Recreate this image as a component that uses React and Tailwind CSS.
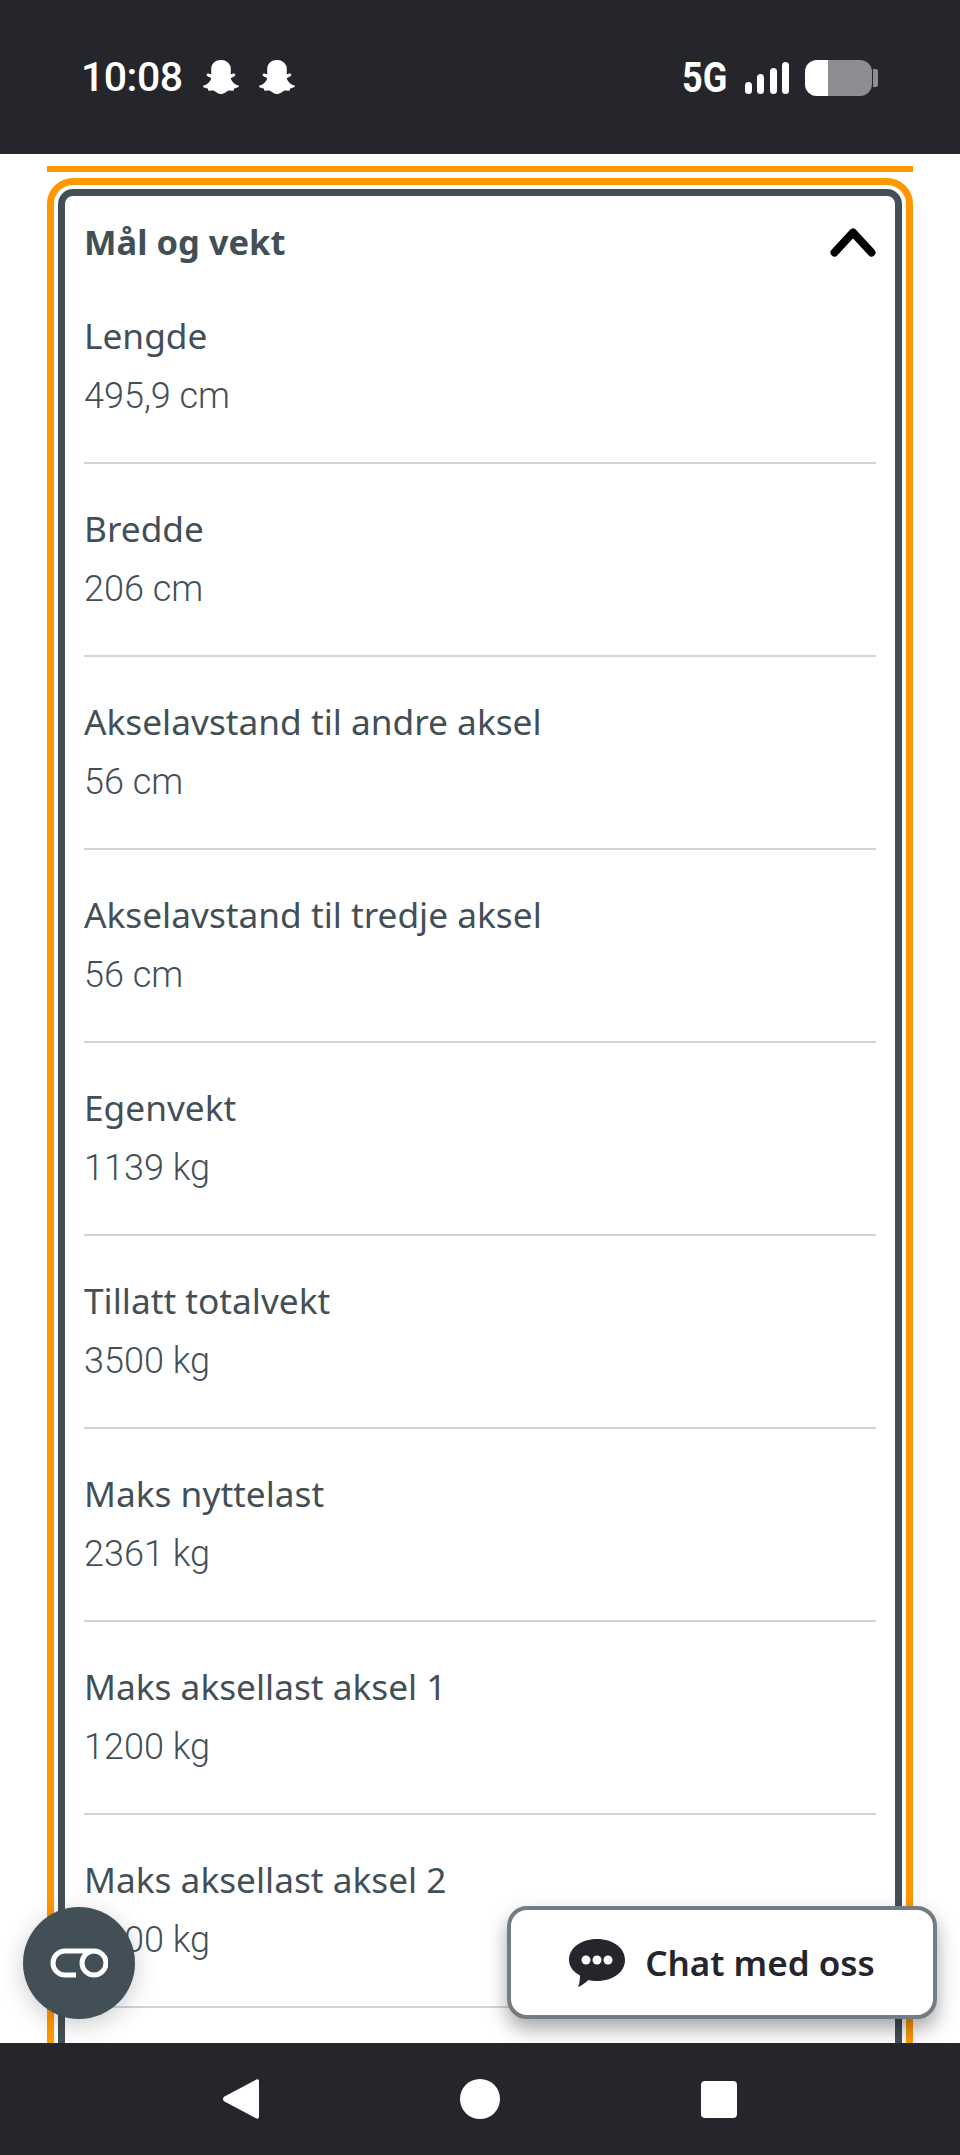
import React from 'react';
import { FaSnapchatGhost } from 'react-icons/fa';

const specs = [
  { label: 'Lengde', value: '495,9 cm' },
  { label: 'Bredde', value: '206 cm' },
  { label: 'Akselavstand til andre aksel', value: '56 cm' },
  { label: 'Akselavstand til tredje aksel', value: '56 cm' },
  { label: 'Egenvekt', value: '1139 kg' },
  { label: 'Tillatt totalvekt', value: '3500 kg' },
  { label: 'Maks nyttelast', value: '2361 kg' },
  { label: 'Maks aksellast aksel 1', value: '1200 kg' },
  { label: 'Maks aksellast aksel 2', value: '1300 kg' },
];

const StatusBar = () => (
  <div className="h-[154px] shrink-0 bg-[#24262b] pl-[81px] pr-[82px] flex items-start justify-between text-white">
    <div className="flex items-center mt-[58px] h-[38px]">
      <span className="text-[41px] leading-[38px] font-medium tracking-[-0.5px] font-['Roboto',sans-serif]">10:08</span>
      <FaSnapchatGhost className="w-[36px] h-[36px] ml-[20px]" />
      <FaSnapchatGhost className="w-[36px] h-[36px] ml-[20px]" />
    </div>
    <div className="flex items-center mt-[59px] h-[38px]">
      <span className="text-[42px] leading-[38px] font-bold font-['Roboto',sans-serif] scale-x-[0.86] origin-left mr-[-7px]">5G</span>
      <svg className="ml-[17px]" width="44" height="32" viewBox="0 0 44 32" fill="#fff">
        <rect x="0" y="20" width="7" height="12" rx="3.5" />
        <rect x="12" y="12" width="7" height="20" rx="3.5" />
        <rect x="25" y="6" width="7" height="26" rx="3.5" />
        <rect x="37" y="0" width="7" height="32" rx="3.5" />
      </svg>
      <div className="ml-[16px] w-[67px] h-[36px] rounded-[12px] bg-[#8e8e92] overflow-hidden">
        <div className="w-[23px] h-full bg-white" />
      </div>
      <div className="ml-[1px] w-[5px] h-[18px] rounded-r-[2px] bg-[#8e8e92]" />
    </div>
  </div>
);

const NavBar = () => (
  <div className="h-[112px] shrink-0 bg-[#24262b] relative z-10 flex items-start justify-center gap-[201px] pt-[36px]">
    <svg width="36" height="40" viewBox="0 0 36 40" fill="#fff">
      <path d="M33 0.8 C34.8 -0.3 36 0.8 36 2.5 L36 37.500 C36 39.200 34.800 40.300 33 39.200 L1.500 22.500 C-0.500 21.200 -0.500 18.800 1.500 17.500 Z" />
    </svg>
    <div className="w-[40px] h-[40px] rounded-full bg-white" />
    <div className="w-[36px] h-[37px] rounded-[4px] bg-white mt-[2px]" />
  </div>
);

const SpecRow = ({ label, value }) => (
  <div className="pt-[35px] pb-[36px] border-b-2 border-[#d2d4d6]">
    <div className="text-[35.25px] leading-[59px] text-[#434f57] font-['Noto_Sans',sans-serif]">{label}</div>
    <div className="mt-[2px] text-[36px] leading-[59px] font-light text-[#434f57] font-['Roboto',sans-serif]">{value}</div>
  </div>
);

const App = () => {
  return (
    <div className="w-[960px] h-[2155px] flex flex-col overflow-hidden bg-white font-['Noto_Sans',sans-serif]">
      <StatusBar />

      <div className="relative flex-1 overflow-hidden px-[47px] pt-[12px]">
        <div className="h-[6px] bg-[#ff9800]" />
        <div className="mt-[6px] border-[7px] border-[#ff9800] rounded-[26px] p-[4px]">
          <div className="border-[7px] border-[#434f57] rounded-[15px] px-[19px] pb-[60px]">
            <div className="h-[75px] pt-[25px] flex items-start justify-between">
              <h2 className="text-[34.5px] leading-[42px] font-bold text-[#434f57]">Mål og vekt</h2>
              <svg className="mt-[6px]" width="46" height="30" viewBox="0 0 46 30" fill="none" stroke="#000" strokeWidth="8" strokeLinecap="round" strokeLinejoin="round">
                <path d="M4.500 25.500 L23 5.500 L41.500 25.500" />
              </svg>
            </div>
            {specs.map((s) => (
              <SpecRow key={s.label} label={s.label} value={s.value} />
            ))}
          </div>
        </div>

        {/* Floating buttons */}
        <button className="absolute left-[23px] bottom-[24px] w-[112px] h-[112px] rounded-full bg-[#434f57] flex items-center justify-center shadow-[0_6px_24px_rgba(0,0,0,0.2)]">
          <svg width="58" height="30" viewBox="0 0 58 30" fill="none" stroke="#fff" strokeWidth="5">
            <path d="M33 3 L44 3 A12 12 0 0 1 44 27 A12 12 0 0 1 44 3 M44 3 L15 3 A12 12 0 0 0 15 27 L26 27" />
          </svg>
        </button>
        <button className="absolute right-[23px] bottom-[24px] w-[430px] h-[113px] rounded-[20px] border-4 border-[#737c83] bg-white flex items-center justify-center gap-[20px] shadow-[0_10px_20px_rgba(0,0,0,0.35)]">
          <svg width="56" height="48" viewBox="0 0 56 48" fill="#24262b">
            <path d="M28 0 C44 0 56 9 56 21 C56 33 44 42 28 42 C25 42 22 41.6 19.500 41 C16 44 12 47 9 48 C10.500 45 11 40 11 36.500 C4.500 33 0 27.500 0 21 C0 9 12 0 28 0 Z" />
            <circle cx="17" cy="21" r="4.500" fill="#fff" />
            <circle cx="28" cy="21" r="4.500" fill="#fff" />
            <circle cx="39" cy="21" r="4.500" fill="#fff" />
          </svg>
          <span className="text-[35px] leading-[42px] font-semibold text-[#24262b]">Chat med oss</span>
        </button>
      </div>

      <NavBar />
    </div>
  );
};

export default App;
